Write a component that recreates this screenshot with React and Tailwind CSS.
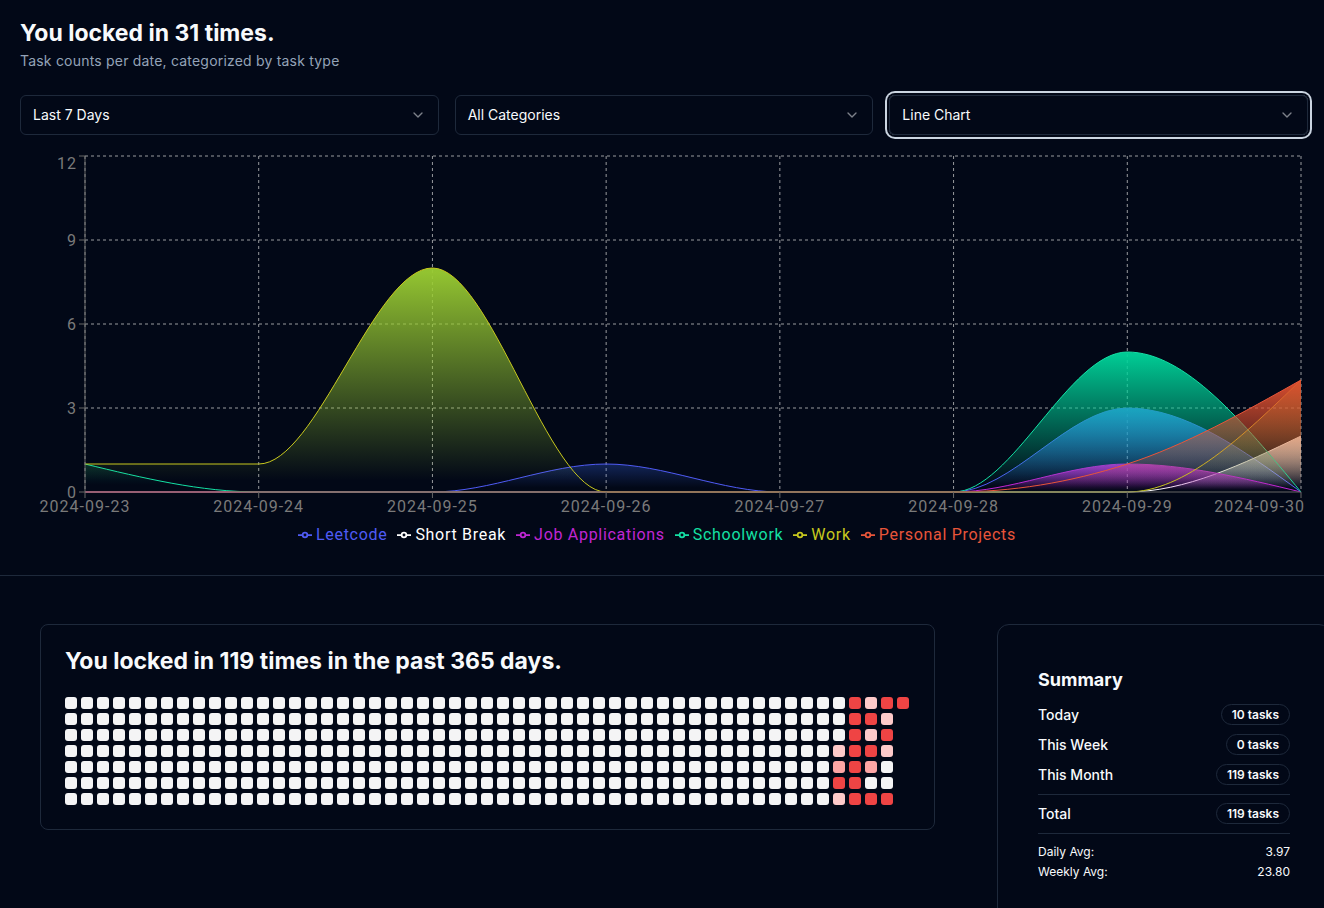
import React from "react";
import { ChevronDown } from "lucide-react";

const dates = [
  "2024-09-23",
  "2024-09-24",
  "2024-09-25",
  "2024-09-26",
  "2024-09-27",
  "2024-09-28",
  "2024-09-29",
  "2024-09-30",
];

const series = [
  { name: "Leetcode", stroke: "#4f5bf5", fill: "#3b6cf6", data: [0, 0, 0, 1, 0, 0, 3, 0] },
  { name: "Short Break", stroke: "#ffffff", fill: "#ffffff", data: [0, 0, 0, 0, 0, 0, 0, 2] },
  { name: "Job Applications", stroke: "#c026d3", fill: "#c026d3", data: [0, 0, 0, 0, 0, 0, 1, 0] },
  { name: "Schoolwork", stroke: "#14e0a4", fill: "#00d49a", data: [1, 0, 0, 0, 0, 0, 5, 0] },
  { name: "Work", stroke: "#c8c81e", fill: "#9acd32", data: [1, 1, 8, 0, 0, 0, 0, 4] },
  { name: "Personal Projects", stroke: "#e8553a", fill: "#e0502f", data: [0, 0, 0, 0, 0, 0, 1, 4] },
];

// chart is drawn in page coordinates, shifted up by the svg's top
const TOP = 135;
const X0 = 85;
const X1 = 1301;
const Y0 = 492;
const UNIT = 28;
const xAt = (i) => X0 + (i * (X1 - X0)) / 7;
const yAt = (v) => Y0 - v * UNIT;

const sign = (x) => (x < 0 ? -1 : 1);

// same maths as d3 curveMonotoneX
function monotonePath(pts) {
  const n = pts.length;
  const m = new Array(n).fill(0);
  for (let i = 1; i < n - 1; i++) {
    const [x0, y0] = pts[i - 1];
    const [x1, y1] = pts[i];
    const [x2, y2] = pts[i + 1];
    const h0 = x1 - x0;
    const h1 = x2 - x1;
    const s0 = (y1 - y0) / h0;
    const s1 = (y2 - y1) / h1;
    const p = (s0 * h1 + s1 * h0) / (h0 + h1);
    m[i] = (sign(s0) + sign(s1)) * Math.min(Math.abs(s0), Math.abs(s1), 0.5 * Math.abs(p)) || 0;
  }
  const sFirst = (pts[1][1] - pts[0][1]) / (pts[1][0] - pts[0][0]);
  m[0] = (3 * sFirst - m[1]) / 2;
  const sLast = (pts[n - 1][1] - pts[n - 2][1]) / (pts[n - 1][0] - pts[n - 2][0]);
  m[n - 1] = (3 * sLast - m[n - 2]) / 2;

  let d = `M${pts[0][0]},${pts[0][1]}`;
  for (let i = 0; i < n - 1; i++) {
    const [x0, y0] = pts[i];
    const [x1, y1] = pts[i + 1];
    const dx = (x1 - x0) / 3;
    d += `C${x0 + dx},${y0 + dx * m[i]},${x1 - dx},${y1 - dx * m[i + 1]},${x1},${y1}`;
  }
  return d;
}

const LegendIcon = ({ color }) => (
  <svg width="14" height="14" viewBox="0 0 32 32" className="mr-1 shrink-0">
    <path
      strokeWidth="4"
      fill="none"
      stroke={color}
      d="M0,16h10.667A5.333,5.333,0,1,1,21.333,16H32M21.333,16A5.333,5.333,0,1,1,10.667,16"
    />
  </svg>
);

const Chart = () => {
  const yTicks = [0, 3, 6, 9, 12];
  return (
    <svg width="1324" height="388" className="block">
      <defs>
        {series.map((s, i) => (
          <linearGradient key={s.name} id={`grad${i}`} x1="0" y1="0" x2="0" y2="1">
            <stop offset="2%" stopColor={s.fill} stopOpacity="0.95" />
            <stop offset="95%" stopColor={s.fill} stopOpacity="0" />
          </linearGradient>
        ))}
      </defs>
      <g transform={`translate(0,${-TOP})`} fontFamily="Roboto, 'Liberation Sans', sans-serif">
        {/* grid */}
        <g stroke="#cccccc" strokeOpacity="0.75" strokeDasharray="3 3" fill="none">
          {yTicks.slice(1).map((t) => (
            <line key={t} x1={X0} x2={X1} y1={yAt(t)} y2={yAt(t)} />
          ))}
          {dates.map((d, i) => (
            <line key={d} x1={xAt(i)} x2={xAt(i)} y1={yAt(12)} y2={Y0} />
          ))}
        </g>

        {/* areas */}
        {series.map((s, i) => {
          const pts = s.data.map((v, k) => [xAt(k), yAt(v)]);
          const line = monotonePath(pts);
          const area = `${line}L${X1},${Y0}L${X0},${Y0}Z`;
          return (
            <g key={s.name}>
              <path d={area} fill={`url(#grad${i})`} stroke="none" />
              <path d={line} fill="none" stroke={s.stroke} strokeWidth="1" />
            </g>
          );
        })}

        {/* axes */}
        <g stroke="#666" fill="none">
          <line x1={X0} x2={X1} y1={Y0} y2={Y0} />
          <line x1={X0} x2={X0} y1={yAt(12)} y2={Y0} />
          {yTicks.map((t) => (
            <line key={t} x1={X0 - 6} x2={X0} y1={yAt(t)} y2={yAt(t)} />
          ))}
          {dates.map((d, i) => (
            <line key={d} x1={xAt(i)} x2={xAt(i)} y1={Y0} y2={Y0 + 6} />
          ))}
        </g>
        <g fill="#7a7a7a" fontSize="16" letterSpacing="1">
          {yTicks.map((t) => (
            <text key={t} x={X0 - 8} y={t === 12 ? 163 : yAt(t)} dy="0.355em" textAnchor="end">
              {t}
            </text>
          ))}
          {dates.map((d, i) => (
            <text
              key={d}
              x={i === 7 ? 1305 : xAt(i)}
              y={506}
              dy="0.355em"
              textAnchor={i === 7 ? "end" : "middle"}
            >
              {d}
            </text>
          ))}
        </g>
      </g>
    </svg>
  );
};

const Select = ({ label, focused }) => (
  <div
    className={`flex h-10 items-center justify-between rounded-md border border-[#1e293b] px-3 text-sm text-[#f8fafc] ${
      focused ? "ring-2 ring-[#cbd5e1] ring-offset-2 ring-offset-[#020817]" : ""
    }`}
  >
    <span>{label}</span>
    <ChevronDown className="h-4 w-4 opacity-50" />
  </div>
);

// heatmap: 53 columns x 7 rows, 365 days
const W = "bg-[#f4f4f5]";
const R = "bg-[#ef4444]";
const P = "bg-[#fecaca]";
const M = "bg-[#fca5a5]";
const tail = {
  48: [W, W, W, P, M, R, P],
  49: [R, R, R, R, R, R, R],
  50: [P, R, P, R, M, W, R],
  51: [R, P, R, P, W, W, R],
  52: [R],
};

const Heatmap = () => {
  const cols = [];
  for (let c = 0; c < 53; c++) {
    const cells = tail[c] || [W, W, W, W, W, W, W];
    cols.push(
      <div key={c} className="flex flex-col gap-1">
        {cells.map((cls, r) => (
          <div key={r} className={`h-3 w-3 rounded-[3px] ${cls}`} />
        ))}
      </div>
    );
  }
  return <div className="flex gap-1">{cols}</div>;
};

const SummaryRow = ({ label, value }) => (
  <div className="flex h-[21px] items-center justify-between">
    <span className="text-sm font-medium">{label}</span>
    <span className="rounded-full border border-[#1e293b] px-2.5 text-xs font-semibold leading-[19px]">
      {value}
    </span>
  </div>
);

export default function App() {
  return (
    <div
      className="h-[908px] w-[1324px] overflow-hidden bg-[#020817] text-[#f8fafc]"
      style={{ fontFamily: "Inter, 'Noto Sans', sans-serif" }}
    >
      {/* chart section */}
      <div className="border-b border-[#1e293b] pb-7">
        <div className="px-5 pt-[19px]">
          <h1 className="text-[23px] font-bold leading-7">You locked in 31 times.</h1>
          <p className="mt-1 text-sm leading-5 tracking-[0.2px] text-[#94a3b8]">
            Task counts per date, categorized by task type
          </p>
          <div className="mt-6 grid w-[1288px] grid-cols-3 gap-4">
            <Select label="Last 7 Days" />
            <Select label="All Categories" />
            <Select label="Line Chart" focused />
          </div>
        </div>
        <Chart />
        <div
          className="flex h-6 items-center justify-center text-[16px] tracking-[0.7px]"
          style={{ fontFamily: "Roboto, 'Liberation Sans', sans-serif" }}
        >
          {series.map((s) => (
            <div key={s.name} className="mr-[10px] flex items-center" style={{ color: s.stroke }}>
              <LegendIcon color={s.stroke} />
              <span>{s.name}</span>
            </div>
          ))}
        </div>
      </div>

      {/* bottom section */}
      <div className="flex items-start pl-10 pt-12">
        <div className="w-[895px] shrink-0 rounded-lg border border-[#1e293b] px-6 pb-6 pt-6">
          <h2 className="text-[23px] font-bold leading-6">
            You locked in 119 times in the past 365 days.
          </h2>
          <div className="mt-6">
            <Heatmap />
          </div>
        </div>

        <div className="ml-[62px] h-[320px] w-[334px] shrink-0 rounded-xl border border-[#1e293b] pl-10 pr-10 pt-[41px]">
          <h3 className="text-lg font-bold leading-7">Summary</h3>
          <div className="mt-[10px] flex flex-col gap-[9px]">
            <SummaryRow label="Today" value="10 tasks" />
            <SummaryRow label="This Week" value="0 tasks" />
            <SummaryRow label="This Month" value="119 tasks" />
          </div>
          <div className="mt-[9px] h-px bg-[#1e293b]" />
          <div className="mt-2">
            <SummaryRow label="Total" value="119 tasks" />
          </div>
          <div className="mt-[9px] h-px bg-[#1e293b]" />
          <div className="mt-2.5 flex flex-col gap-1 text-xs">
            <div className="flex justify-between leading-4">
              <span>Daily Avg:</span>
              <span>3.97</span>
            </div>
            <div className="flex justify-between leading-4">
              <span>Weekly Avg:</span>
              <span>23.80</span>
            </div>
          </div>
        </div>
      </div>
    </div>
  );
}
